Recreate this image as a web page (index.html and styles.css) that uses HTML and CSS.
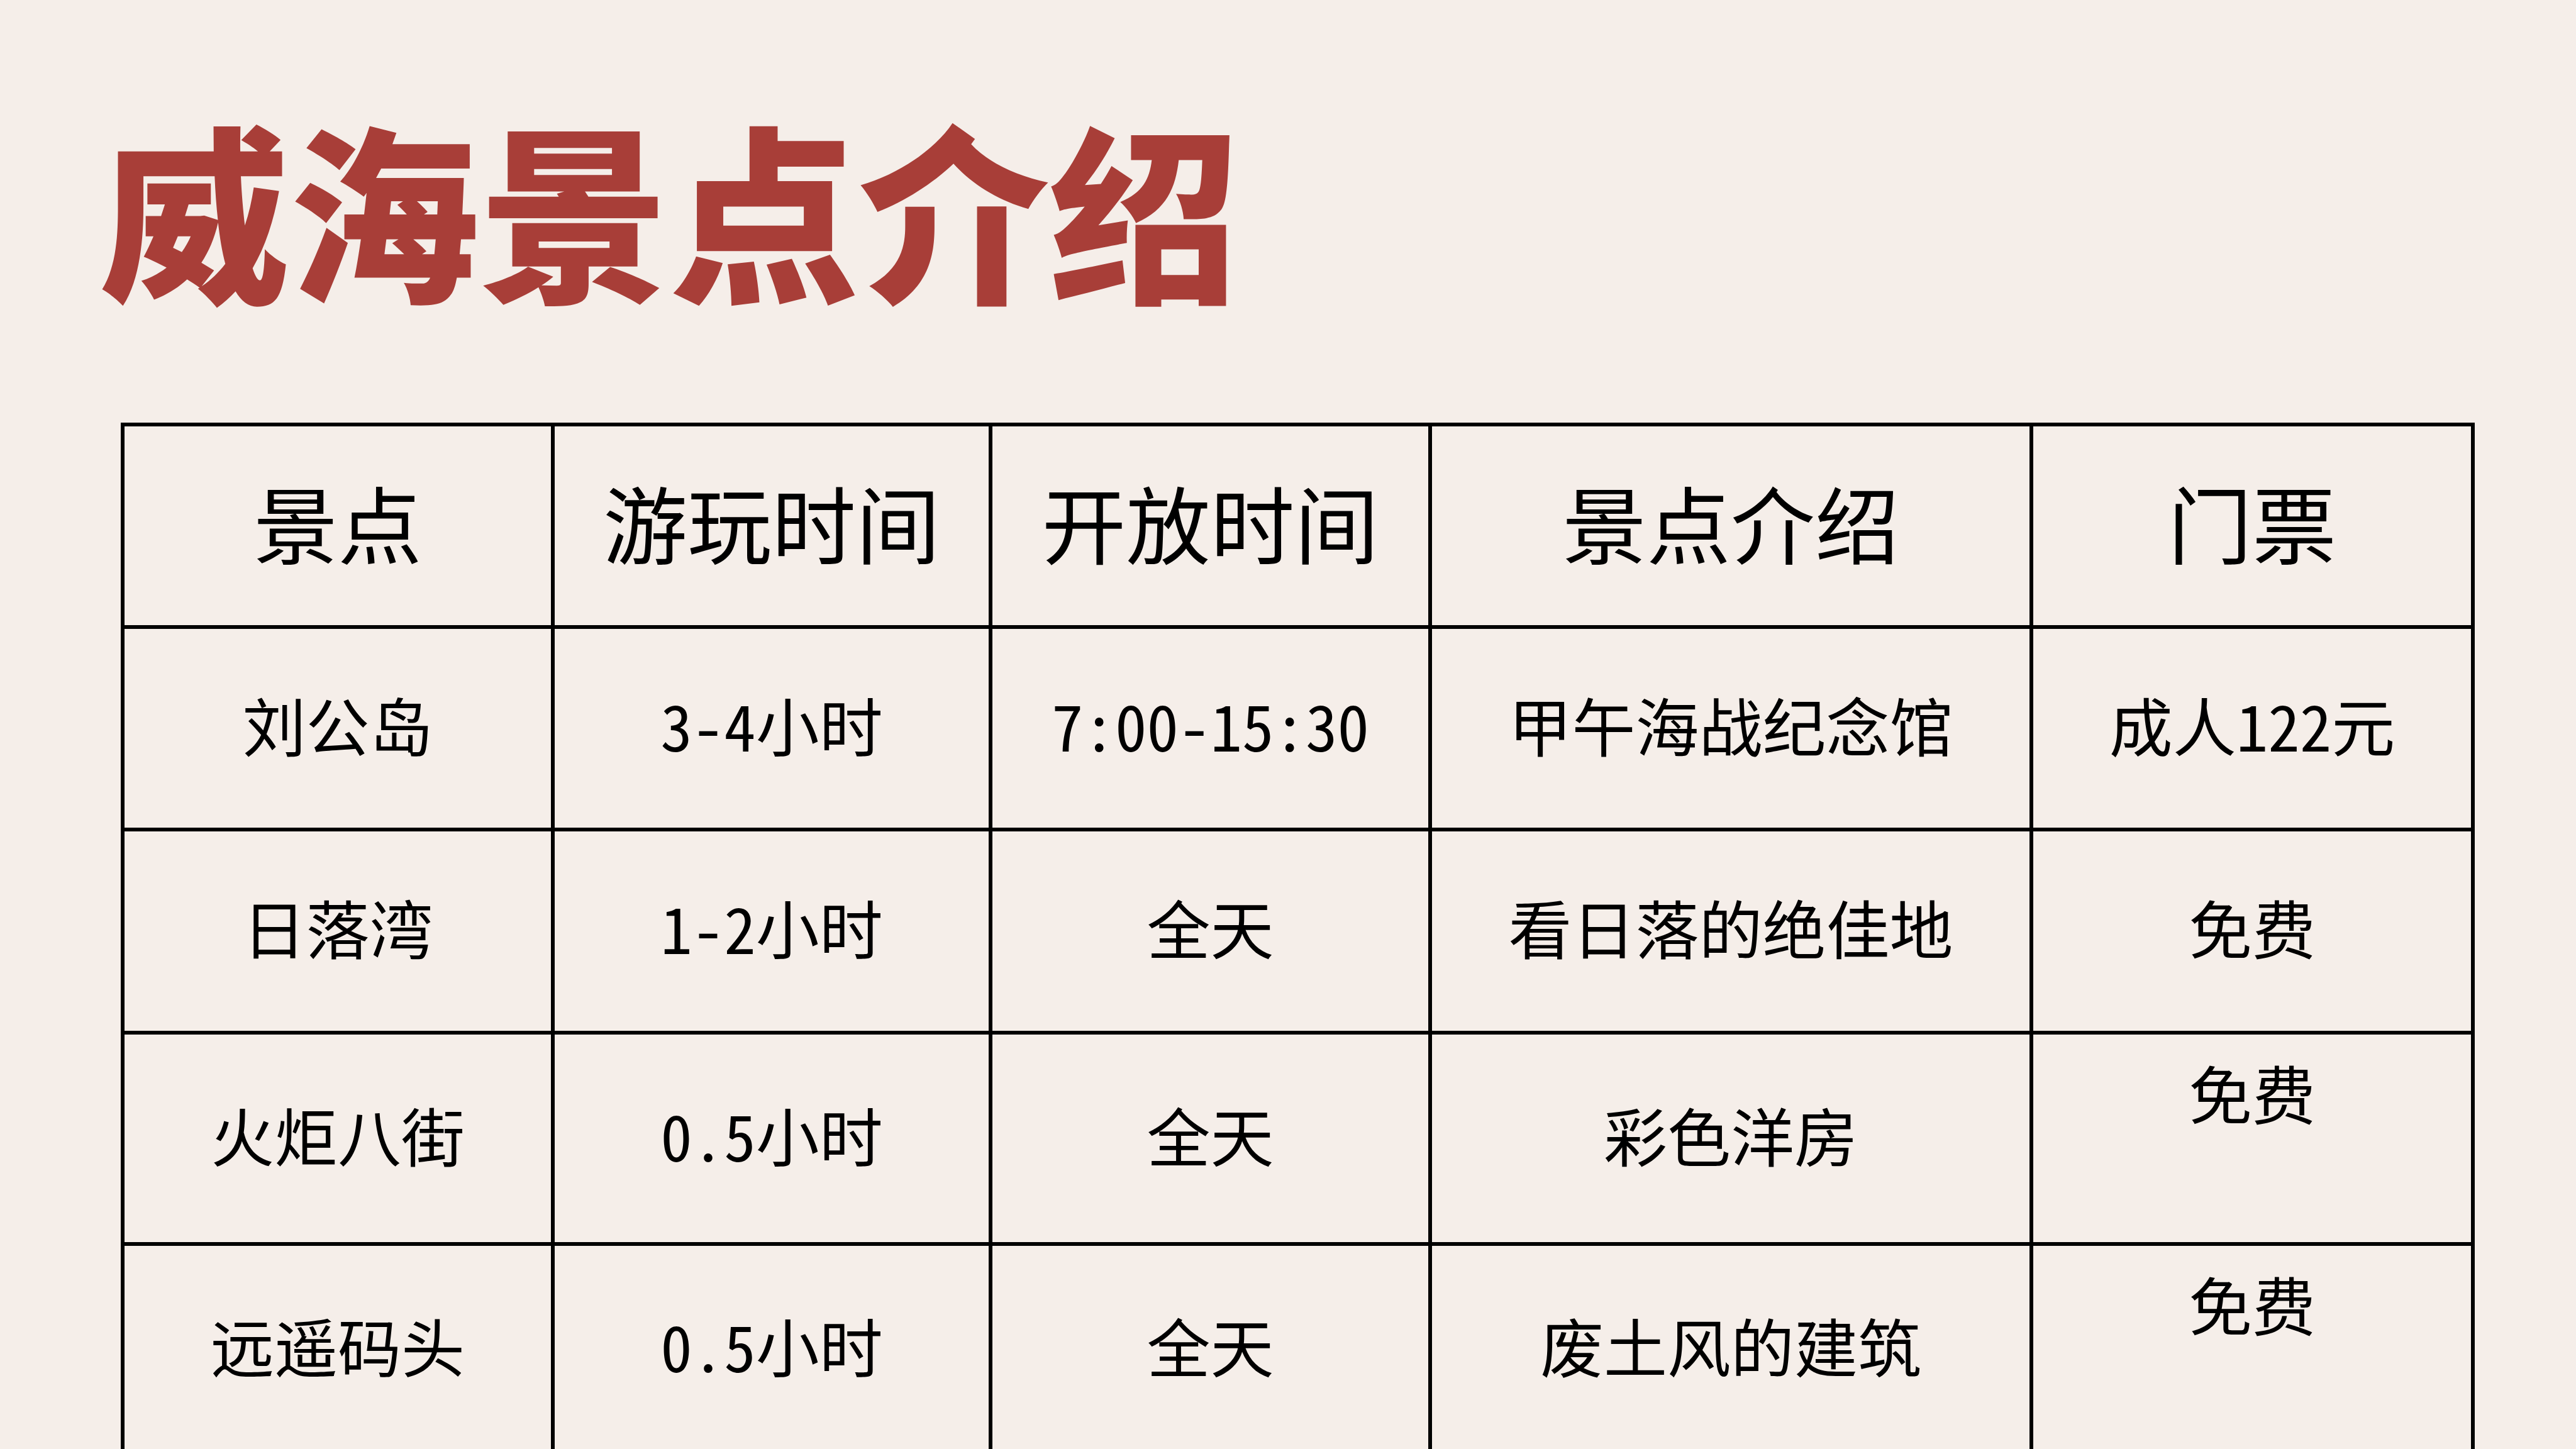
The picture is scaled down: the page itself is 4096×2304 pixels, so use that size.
FILE: index.html
```html
<!DOCTYPE html>
<html lang="zh-CN">
<head>
<meta charset="utf-8">
<title>威海景点介绍</title>
<link rel="stylesheet" href="styles.css">
</head>
<body>
<main class="page">
  <h1 class="title">威海景点介绍</h1>
  <div class="sheet" role="table">
    <div class="cell head">景点</div>
    <div class="cell head">游玩时间</div>
    <div class="cell head">开放时间</div>
    <div class="cell head">景点介绍</div>
    <div class="cell head">门票</div>

    <div class="cell">刘公岛</div>
    <div class="cell">3-4小时</div>
    <div class="cell">7:00-15:30</div>
    <div class="cell">甲午海战纪念馆</div>
    <div class="cell">成人122元</div>

    <div class="cell">日落湾</div>
    <div class="cell">1-2小时</div>
    <div class="cell">全天</div>
    <div class="cell">看日落的绝佳地</div>
    <div class="cell">免费</div>

    <div class="cell">火炬八街</div>
    <div class="cell">0.5小时</div>
    <div class="cell">全天</div>
    <div class="cell">彩色洋房</div>
    <div class="cell top">免费</div>

    <div class="cell">远遥码头</div>
    <div class="cell">0.5小时</div>
    <div class="cell">全天</div>
    <div class="cell">废土风的建筑</div>
    <div class="cell top">免费</div>
  </div>
</main>
</body>
</html>
```

FILE: styles.css
```css
html, body {
  margin: 0;
  padding: 0;
  background: #f5eee9;
  overflow: hidden;
}

.page {
  width: 4096px;
  height: 2304px;
  box-sizing: border-box;
  padding: 178px 0 0 158px;
}

.title {
  margin: 0;
  font-family: "Noto Sans CJK SC", sans-serif;
  font-weight: 900;
  font-size: 302px;
  line-height: 300px;
  color: #a83e38;
  white-space: nowrap;
}

.sheet {
  margin: 194px 0 0 34px;
  display: grid;
  grid-template-columns: 678px 690px 693px 950px 696px;
  grid-template-rows: 316px 316px 317px 330px 328px;
  gap: 6px;
  padding: 6px;
  width: max-content;
  background: #000;
}

.cell {
  background: #f5eee9;
  display: flex;
  align-items: center;
  justify-content: center;
  padding-bottom: 14px;
  font-family: "Noto Sans Mono CJK SC", "Noto Sans CJK SC", sans-serif;
  font-size: 101px;
  line-height: 1;
  color: #000;
  white-space: nowrap;
}

.head {
  font-size: 134px;
}

.top {
  align-items: flex-start;
  padding-top: 41px;
  padding-bottom: 0;
}
```
